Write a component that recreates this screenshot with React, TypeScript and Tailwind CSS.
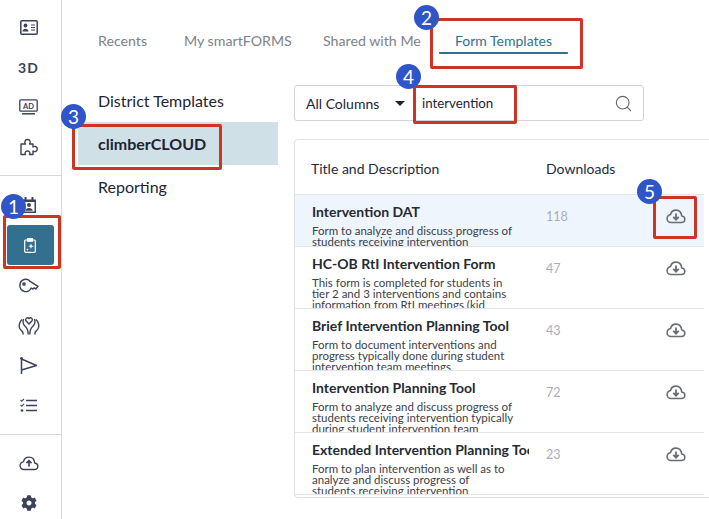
import { Search } from 'lucide-react';
import { FaCog } from 'react-icons/fa';

const rows = [
  { title: 'Intervention DAT', lines: ['Form to analyze and discuss progress of', 'students receiving intervention'], count: 118, first: true },
  { title: 'HC-OB RtI Intervention Form', lines: ['This form is completed for students in', 'tier 2 and 3 interventions and contains', 'information from RtI meetings (kid'], count: 47 },
  { title: 'Brief Intervention Planning Tool', lines: ['Form to document interventions and', 'progress typically done during student', 'intervention team meetings'], count: 43 },
  { title: 'Intervention Planning Tool', lines: ['Form to analyze and discuss progress of', 'students receiving intervention typically', 'during student intervention team'], count: 72 },
  { title: 'Extended Intervention Planning Tool', lines: ['Form to plan intervention as well as to', 'analyze and discuss progress of', 'students receiving intervention'], count: 23 },
];

function CloudDown() {
  return (
    <svg width="20" height="15" viewBox="0 0 22 16" fill="none" stroke="currentColor" strokeWidth="1.700">
      <path d="M5.500 14.600h11.200c2.300 0 4-1.600 4-3.600 0-1.900-1.500-3.400-3.400-3.600C16.900 3.600 14.300 1 11 1 8 1 5.600 3 5 5.900 2.900 6.500 1.200 8.300 1.200 10.500c0 2.300 1.900 4.100 4.300 4.100z" strokeLinejoin="round" />
      <path d="M11 4.800v6.400M8 8.400l3 3 3-3" strokeWidth="2" />
    </svg>
  );
}

function NavItem({ children, active }: { children: React.ReactNode; active?: boolean }) {
  return (
    <div className={active ? 'h-10 ml-[7px] mr-[7px] pr-[2px] flex items-center justify-center rounded-[3px] bg-[#336f8f] text-white' : 'h-10 pr-[4px] flex items-center justify-center text-[#3c4257]'}>
      {children}
    </div>
  );
}

function Badge({ n, className }: { n: number; className: string }) {
  return (
    <div className={`absolute w-[25px] h-[25px] rounded-full bg-[#2f55c9] text-white text-[19px] leading-[25px] text-center ${className}`}>
      {n}
    </div>
  );
}

export default function App() {
  return (
    <div className="relative w-[709px] h-[519px] overflow-hidden bg-white flex text-[#1f2433] font-['Lato',sans-serif]">
      {/* SIDEBAR */}
      <aside className="w-[62px] shrink-0 border-r border-[#d9d9d9]">
        <div className="pt-[7px] pb-2 border-b border-[#d9d9d9]">
          <NavItem>
            <svg width="18" height="15" viewBox="0 0 18 15" fill="none" stroke="currentColor" strokeWidth="1.500">
              <rect x="0.800" y="0.800" width="16.400" height="13.400" rx="1" />
              <circle cx="5.500" cy="5.500" r="1.900" fill="currentColor" stroke="none" />
              <path d="M2.500 11.500c0-3.600 6-3.600 6 0z" fill="currentColor" stroke="none" />
              <path d="M11 5h4M11 7.500h4M11 10h4" strokeWidth="1.200" />
            </svg>
          </NavItem>
          <NavItem><span className="text-[14px] font-bold tracking-[1px]">3D</span></NavItem>
          <NavItem>
            <svg width="19" height="16" viewBox="0 0 19 16" fill="none" stroke="currentColor" strokeWidth="1.300">
              <rect x="0.800" y="0.800" width="17.400" height="11.400" rx="1" />
              <path d="M3 14.800h13" strokeWidth="1.500" />
              <text x="9.500" y="10" textAnchor="middle" fontSize="7.500" fontWeight="700" fill="currentColor" stroke="none">AD</text>
            </svg>
          </NavItem>
          <NavItem>
            <svg width="18" height="18" viewBox="0 0 18 18" fill="none" stroke="currentColor" strokeWidth="1.400" strokeLinejoin="round">
              <path d="M1 6h4.500c-1-1-1.200-4.500 2-4.500s3 3.500 2 4.500H13v3c1-1 4.300-1 4.300 2s-3.300 3-4.300 2v3.500H9.500c.8-1 .6-3.500-2-3.500S4.700 15.500 5.500 16.500H1z" />
            </svg>
          </NavItem>
        </div>
        <div className="pt-[9px] pb-[9px] border-b border-[#d9d9d9]">
          <NavItem>
            <svg width="16" height="16" viewBox="0 0 16 16" fill="currentColor">
              <path d="M1 2.500h14V16H1z" />
              <rect x="3.500" y="0" width="2" height="4" />
              <rect x="10.500" y="0" width="2" height="4" />
              <rect x="2.500" y="5" width="11" height="9.500" fill="#fff" />
              <circle cx="8" cy="8" r="2" />
              <path d="M4.300 13.800c0-3.600 7.400-3.600 7.400 0z" />
            </svg>
          </NavItem>
          <NavItem active>
            <svg width="12" height="15" viewBox="0 0 12 15" fill="none" stroke="currentColor" strokeWidth="1.200">
              <rect x="0.700" y="2" width="10.600" height="12.300" rx="1" />
              <rect x="3.500" y="0.600" width="5" height="2.600" fill="currentColor" />
              <path d="M7 5.500l.8 2 2 .8-2 .8-.8 2-.8-2-2-.8 2-.8zM3.500 10.200l.4 1 1 .4-1 .4-.4 1-.4-1-1-.4 1-.4z" fill="currentColor" stroke="none" />
            </svg>
          </NavItem>
          <NavItem>
            <svg width="20" height="15" viewBox="0 0 20 15" fill="none" stroke="currentColor" strokeWidth="1.500" strokeLinejoin="round">
              <path d="M1 7a5.800 5.800 0 0 1 10.500-3.300l7.500 4.600-2.200 2.700-1.500-1.100-1.700 1.100-1.500-1A5.800 5.800 0 0 1 1 7z" />
              <circle cx="5" cy="6" r="1.100" />
            </svg>
          </NavItem>
          <NavItem>
            <svg width="22" height="20" viewBox="0 0 22 20" fill="none" stroke="currentColor" strokeWidth="1.400">
              <path d="M11 9L8 5.800C6.600 4 9.300 1.500 11 3.600 12.700 1.500 15.400 4 14 5.800z" strokeLinejoin="round" />
              <path d="M4 4.500C2 6.500 1 9 1.300 12c.3 2.500 2 3.600 3.500 5l.4 2.500" />
              <path d="M5.500 4c-1 3 -.5 5.500 1.800 7.500 2.200 2 2.900 4 2.900 8" />
              <path d="M18 4.500c2 2 3 4.500 2.700 7.500-.3 2.500-2 3.600-3.500 5l-.4 2.500" />
              <path d="M16.500 4c1 3 .5 5.500-1.800 7.500-2.200 2-2.900 4-2.900 8" />
            </svg>
          </NavItem>
          <NavItem>
            <svg width="18" height="17" viewBox="0 0 18 17" fill="none" stroke="currentColor" strokeWidth="1.400">
              <path d="M1.500 1v16" strokeWidth="1.500" />
              <circle cx="1.500" cy="1.300" r="1.300" fill="currentColor" stroke="none" />
              <path d="M1.500 2l15 6.500-15 4.500" strokeLinejoin="round" />
            </svg>
          </NavItem>
          <NavItem>
            <svg width="17" height="15" viewBox="0 0 17 15" fill="none" stroke="currentColor">
              <path d="M6 2.500h11M6 7.500h11M6 12.500h11" strokeWidth="1.600" />
              <path d="M.5 2l1.300 1.300L4 .8M.5 7l1.300 1.300L4 5.800" strokeWidth="1.100" />
              <circle cx="2" cy="12.500" r="1.300" fill="currentColor" stroke="none" />
            </svg>
          </NavItem>
        </div>
        <div className="pt-2">
          <NavItem>
            <svg width="20" height="15" viewBox="0 0 22 16" fill="none" stroke="currentColor" strokeWidth="1.500">
              <path d="M5.500 14.600h11.200c2.300 0 4-1.600 4-3.600 0-1.900-1.500-3.400-3.400-3.600C16.900 3.600 14.300 1 11 1 8 1 5.600 3 5 5.900 2.900 6.500 1.200 8.300 1.200 10.500c0 2.300 1.900 4.100 4.300 4.100z" strokeLinejoin="round" />
              <path d="M11 11.500V5M8.200 7.600L11 4.800l2.800 2.800" strokeWidth="1.700" />
            </svg>
          </NavItem>
          <NavItem><FaCog size={16} /></NavItem>
        </div>
      </aside>

      {/* CONTENT */}
      <main className="flex-1 min-w-0">
        <nav className="h-[54px] pt-[32px] pl-9 flex items-start text-[14.200px] leading-[18px] text-[#7d8288]">
          <span className="w-[86px]">Recents</span>
          <span className="w-[139px]">My smartFORMS</span>
          <span className="w-[116px]">Shared with Me</span>
          <div className="w-[129px] h-[22px] border-b-[2.500px] border-[#336f8f] rounded-[1px] text-center text-[14px] text-[#336f8f]">
            Form Templates
          </div>
        </nav>

        <div className="flex mt-[31px]">
          <div className="w-[232px] shrink-0 text-[16px]">
            <div className="pl-9 h-[37px] pt-[4px] leading-6">District Templates</div>
            <div className="ml-4 w-[200px] h-[43px] pl-5 flex items-center bg-[#cfe0e6] font-bold">climberCLOUD</div>
            <div className="pl-9 pt-[10px] leading-6">Reporting</div>
          </div>

          <div className="flex-1 min-w-0">
            <div className="w-[350px] h-[36px] flex items-center rounded-[3px] border border-[#cfd2d8] text-[14px]">
              <span className="w-[94px] pl-[11px]">All Columns</span>
              <span className="w-[22px] flex justify-center">
                <span className="w-0 h-0 border-x-[5px] border-x-transparent border-t-[5px] border-t-[#1f2433]" />
              </span>
              <span className="flex-1 pl-[11px] pt-[2px] text-[13.300px]">intervention</span>
              <Search size={19} strokeWidth={1.400} className="mr-[10px] text-[#62666b]" />
            </div>

            <div className="mt-[18px] w-[430px] h-[359px] rounded-[4px] border border-[#e0e2e6] overflow-hidden">
              <div className="w-[409px] h-[55px] pt-[2px] flex items-center text-[14px] text-[#232a3d] border-b border-[#e3e5ea]">
                <span className="w-[251px] pl-4">Title and Description</span>
                <span>Downloads</span>
              </div>
              {rows.map((row) => (
                <div
                  key={row.title}
                  className={row.first ? 'w-[409px] h-[52px] flex overflow-hidden bg-[#eff5fc] border-b border-[#e3e5ea]' : 'w-[409px] h-[62px] flex overflow-hidden border-b border-[#e3e5ea]'}
                >
                  <div className="w-[217px] shrink-0 ml-[17px] overflow-hidden">
                    <div className="mt-[8px] h-[18px] leading-[18px] text-[14px] font-bold whitespace-nowrap overflow-hidden text-[#262a33]">{row.title}</div>
                    <div className="mt-[4px] text-[11.500px] leading-[11px] text-[#3c4048] whitespace-nowrap">
                      {row.lines.map((line) => (
                        <div key={line}>{line}</div>
                      ))}
                    </div>
                  </div>
                  <div className="w-[127px] pl-[17px] shrink-0 text-[12.500px] text-[#a9adb8] flex items-center h-[44px]">{row.count}</div>
                  <div className="w-[40px] h-[42px] flex items-center justify-center text-[#6a6d72]">
                    <CloudDown />
                  </div>
                </div>
              ))}
            </div>
          </div>
        </div>
      </main>

      {/* annotations */}
      <div className="absolute left-[3px] top-[215px] w-[58px] h-[54px] rounded-[2px] border-[3px] border-[#cc3526]" />
      <div className="absolute left-[430px] top-[18px] w-[153px] h-[51px] rounded-[2px] border-[3px] border-[#cc3526]" />
      <div className="absolute left-[72px] top-[124px] w-[150px] h-[46px] rounded-[2px] border-[3px] border-[#cc3526]" />
      <div className="absolute left-[413px] top-[85px] w-[104px] h-[39px] rounded-[2px] border-[3px] border-[#cc3526]" />
      <div className="absolute left-[653px] top-[196px] w-[44px] h-[43px] rounded-[2px] border-[3px] border-[#cc3526]" />
      <Badge n={1} className="left-[1px] top-[194px]" />
      <Badge n={2} className="left-[414px] top-[5px]" />
      <Badge n={3} className="left-[61px] top-[104px]" />
      <Badge n={4} className="left-[396px] top-[64px]" />
      <Badge n={5} className="left-[637px] top-[179px]" />
    </div>
  );
}
